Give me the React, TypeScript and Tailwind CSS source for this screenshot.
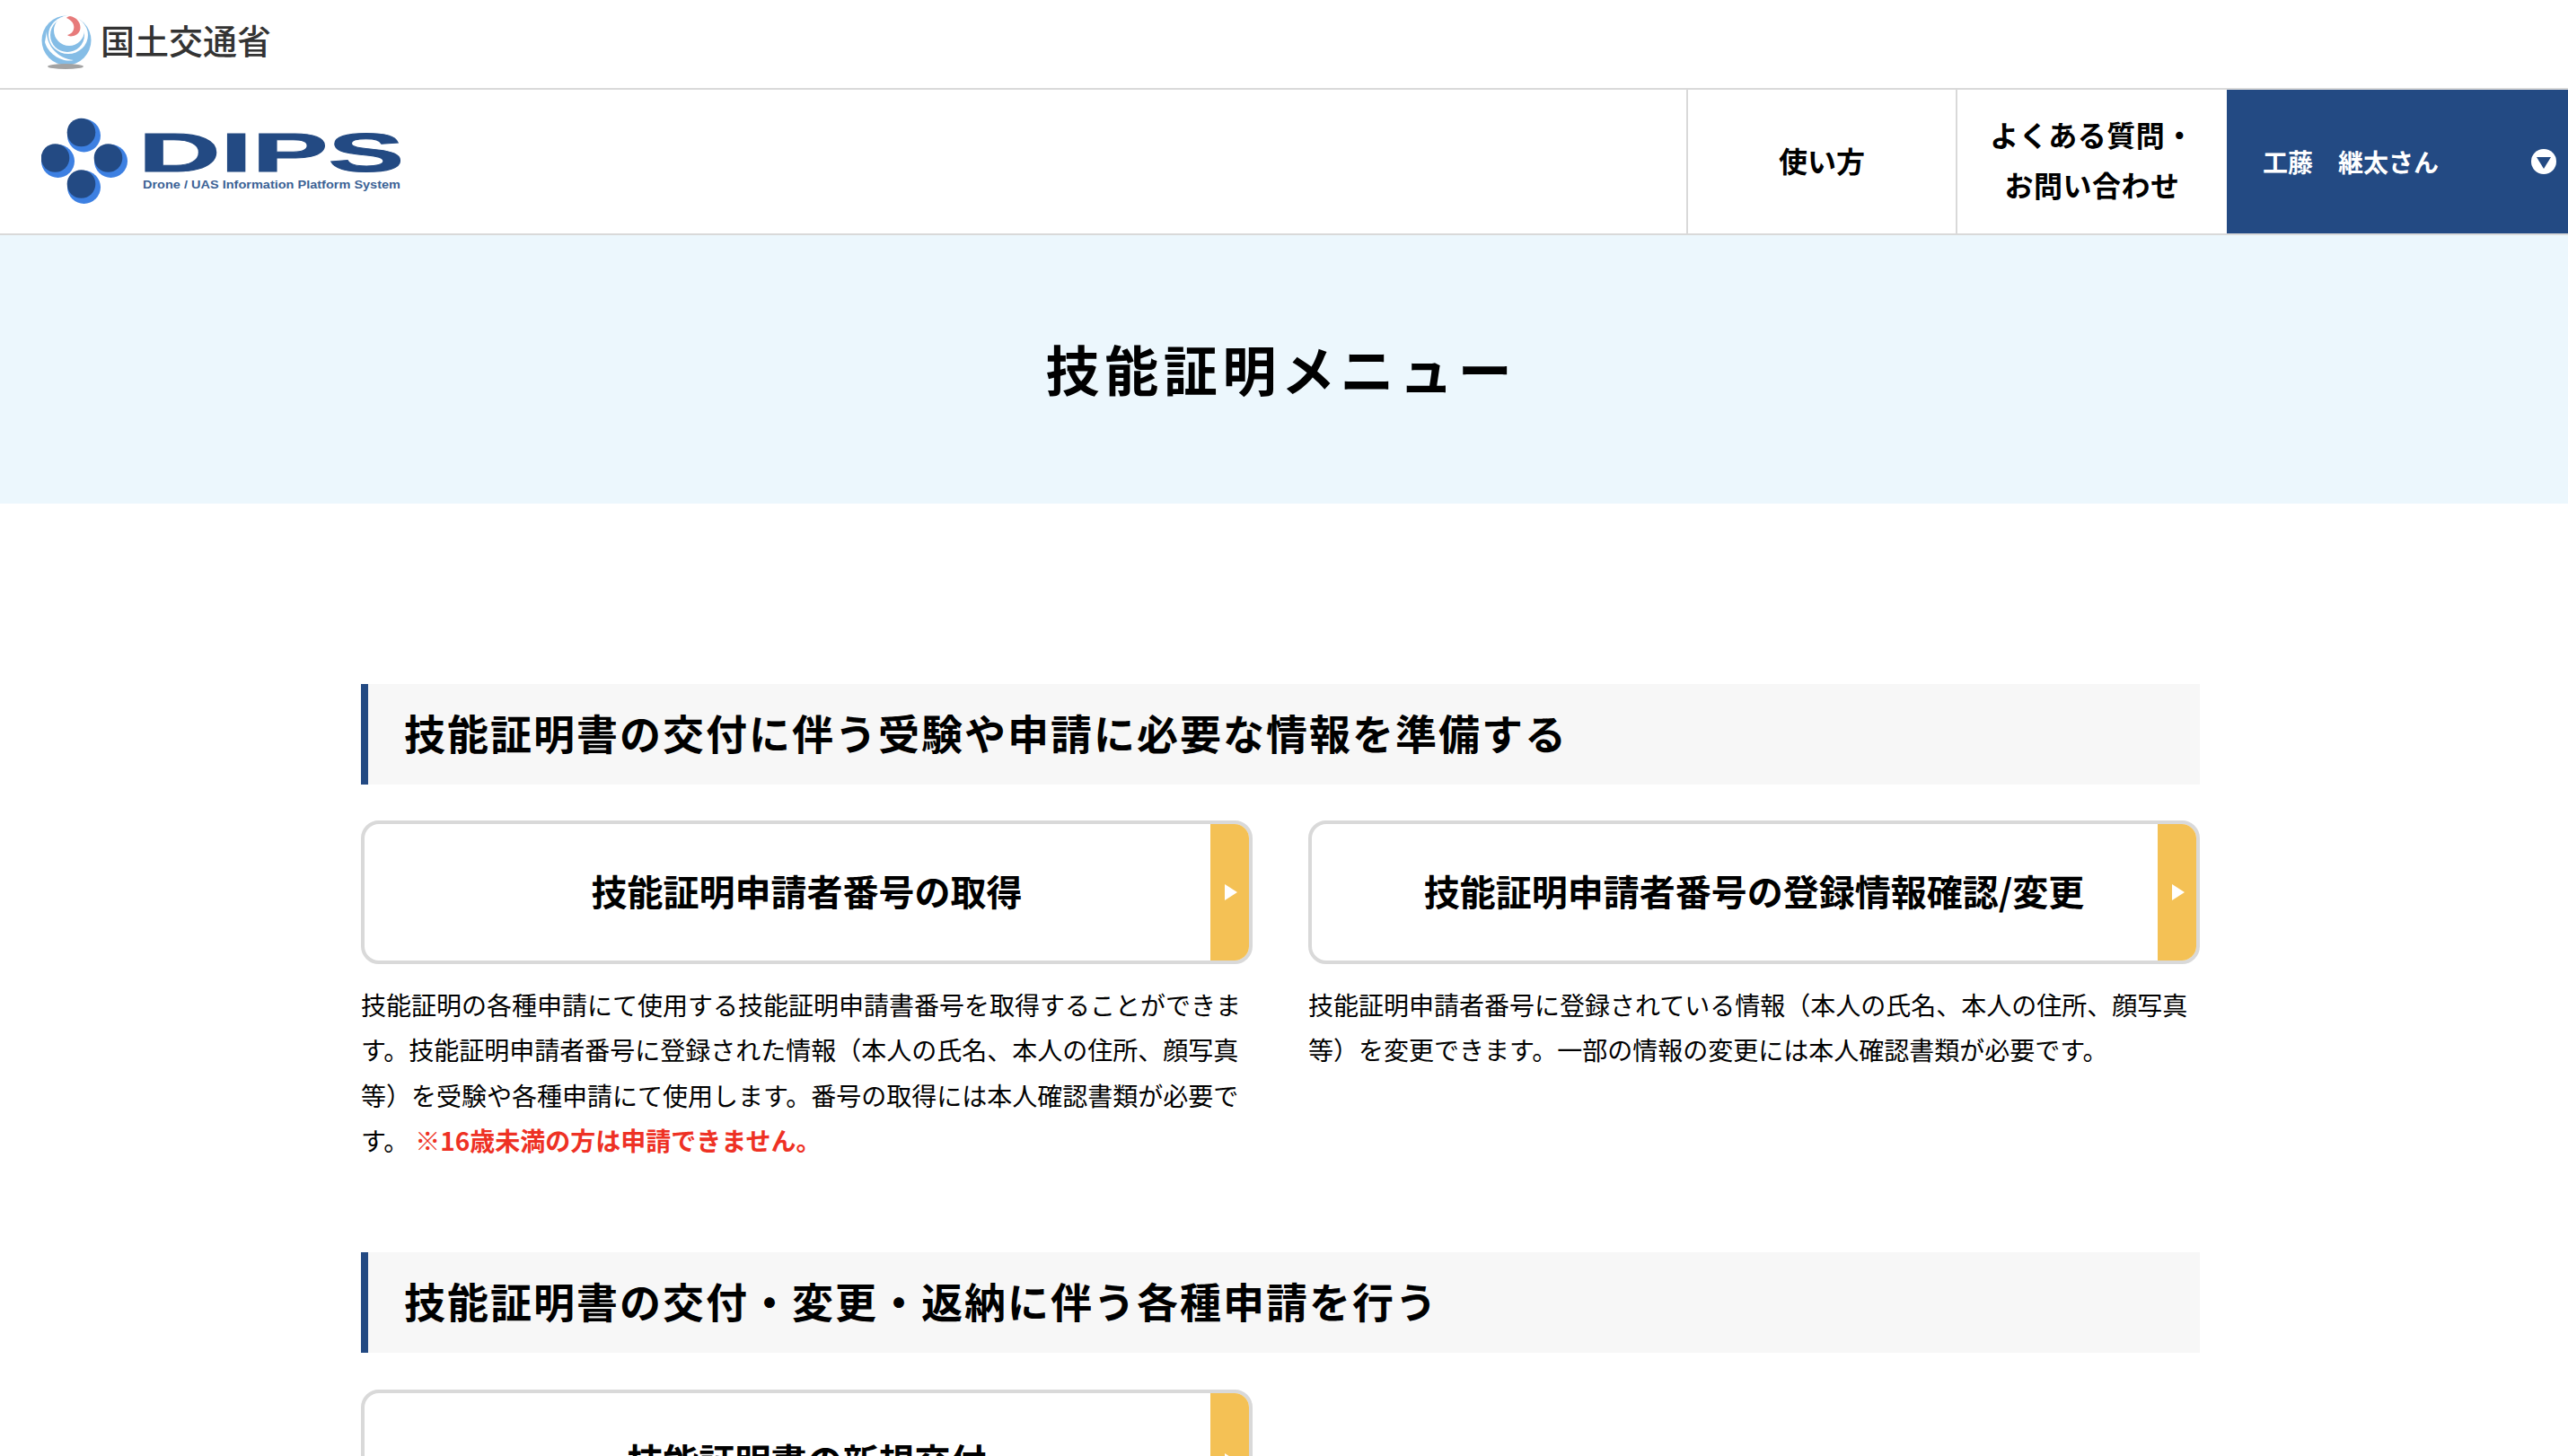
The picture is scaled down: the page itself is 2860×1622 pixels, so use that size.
import React from 'react';

const jp = "font-['Noto_Sans_CJK_JP','Liberation_Sans',sans-serif]";

function MlitLogo() {
  return (
    <svg width="60" height="64" viewBox="0 0 60 64" className="shrink-0">
      <circle cx="30" cy="28" r="27.5" fill="#85bde6" />
      <ellipse cx="32" cy="22" rx="22" ry="21" fill="#fff" />
      <ellipse cx="31" cy="22" rx="19" ry="19" fill="#85bde6" />
      <ellipse cx="33" cy="17" rx="17" ry="17" fill="#fff" />
      <path d="M34 1 C47 3 50 20 38 23 C34 24 32 23 31 22 C40 20 42 8 30 3 C31 2 32 1 34 1Z" fill="#e77b7b" />
      <path d="M8 18 C8 34 20 48 38 50 C26 53 10 44 6 30Z" fill="#fff" />
      <ellipse cx="29" cy="57" rx="20" ry="3" fill="#a3a3a3" />
    </svg>
  );
}

function DipsLogo() {
  return (
    <svg width="400" height="100" viewBox="0 0 400 100">
      {[[47.5, 21], [18.5, 49.5], [77.5, 49.5], [47.5, 78.5]].map(([cx, cy]) => (
        <g key={`${cx}-${cy}`}>
          <circle cx={cx} cy={cy} r="18.5" fill="#3d80e2" />
          <circle cx={cx - 3} cy={cy - 3.5} r="15.8" fill="#234a83" />
        </g>
      ))}
      <text x="108" y="61" fontFamily="Liberation Sans" fontWeight="700" fontSize="61" fill="#234a83" stroke="#234a83" strokeWidth="1" textLength="296" lengthAdjust="spacingAndGlyphs">DIPS</text>
      <text x="113" y="80" fontFamily="Liberation Sans" fontWeight="700" fontSize="13" fill="#3b6295" textLength="287" lengthAdjust="spacingAndGlyphs">Drone / UAS Information Platform System</text>
    </svg>
  );
}

function SectionHeading({ children }: { children: React.ReactNode }) {
  return (
    <h2 className="h-[112px] flex items-center bg-[#f7f7f7] border-l-[8px] border-[#234a83] pl-[40px] pb-[5px] text-[46px] font-bold tracking-[2px] text-black">
      {children}
    </h2>
  );
}

function MenuCard({ title }: { title: string }) {
  return (
    <div className="h-[160px] flex border-[4px] border-[#d9d9d9] rounded-[20px] overflow-hidden bg-white">
      <div className="flex-1 flex items-center justify-center pl-[43px] pb-[4px] text-[40px] font-bold text-black">{title}</div>
      <div className="w-[43px] bg-[#f4c155] flex items-center justify-center pl-[2px]">
        <span className="w-0 h-0 border-y-[9px] border-y-transparent border-l-[14px] border-l-white" />
      </div>
    </div>
  );
}

export default function App() {
  return (
    <div className={`h-screen overflow-hidden bg-white text-black ${jp}`}>
      <div className="h-[100px] flex items-center pl-[44px] gap-[8px] border-b-2 border-[#d9d9d9]">
        <MlitLogo />
        <span className="text-[38px] font-medium text-[#333] pb-[12px]">国土交通省</span>
      </div>

      <header className="h-[162px] flex border-b-2 border-[#d9d9d9]">
        <div className="flex-1 flex items-center pl-[46px]">
          <DipsLogo />
        </div>
        <div className="w-[300px] border-l-2 border-[#d9d9d9] flex items-center justify-center pb-[5px] text-[32px] font-bold">使い方</div>
        <div className="w-[302px] border-l-2 border-[#d9d9d9] flex items-center justify-center text-center text-[32px] font-bold tracking-[0.5px]">
          <span className="leading-[56px] pb-[6px]">よくある質問・<br />お問い合わせ</span>
        </div>
        <div className="w-[380px] bg-[#234a83] flex items-center justify-between pl-[40px] pr-[13px] text-white text-[28px] font-bold">
          <span>工藤　継太さん</span>
          <span className="w-[28px] h-[28px] rounded-full bg-white flex items-center justify-center">
            <span className="w-0 h-0 border-x-[8px] border-x-transparent border-t-[13px] border-t-[#234a83] mt-[3px]" />
          </span>
        </div>
      </header>

      <div className="h-[299px] bg-[#ecf7fd] flex items-center justify-center pb-[4px]">
        <h1 className="mr-[6px] text-[60px] font-bold tracking-[5.6px]">技能証明メニュー</h1>
      </div>

      <main className="w-[2048px] ml-[402px] pt-[201px]">
        <SectionHeading>技能証明書の交付に伴う受験や申請に必要な情報を準備する</SectionHeading>
        <div className="grid grid-cols-2 gap-x-[62px] mt-[40px]">
          <div>
            <MenuCard title="技能証明申請者番号の取得" />
            <p className="mt-[20px] text-[28px] leading-[50.4px]">
              技能証明の各種申請にて使用する技能証明申請書番号を取得することができます。技能証明申請者番号に登録された情報（本人の氏名、本人の住所、顔写真等）を受験や各種申請にて使用します。番号の取得には本人確認書類が必要です。
              <span className="ml-[7px] font-bold text-[#ee3124]">※16歳未満の方は申請できません。</span>
            </p>
          </div>
          <div>
            <MenuCard title="技能証明申請者番号の登録情報確認/変更" />
            <p className="mt-[20px] text-[28px] leading-[50.4px]">
              技能証明申請者番号に登録されている情報（本人の氏名、本人の住所、顔写真等）を変更できます。一部の情報の変更には本人確認書類が必要です。
            </p>
          </div>
        </div>

        <div className="mt-[99px]">
          <SectionHeading>技能証明書の交付・変更・返納に伴う各種申請を行う</SectionHeading>
        </div>
        <div className="grid grid-cols-2 gap-x-[62px] mt-[41px]">
          <MenuCard title="技能証明書の新規交付" />
        </div>
      </main>
    </div>
  );
}
